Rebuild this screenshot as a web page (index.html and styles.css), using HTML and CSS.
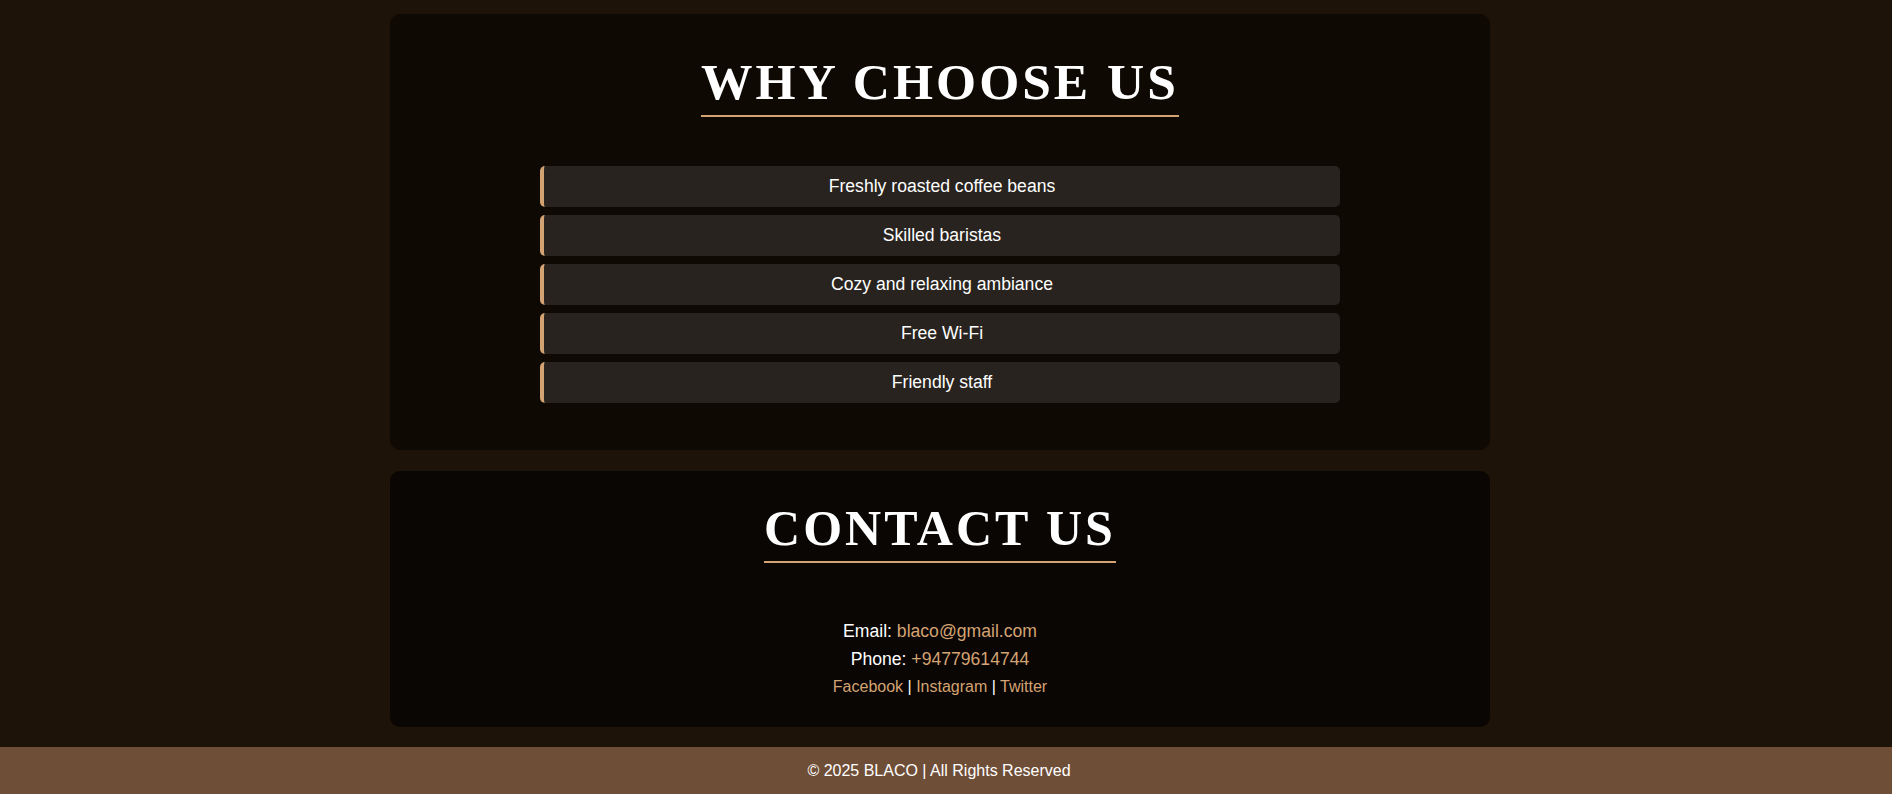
FILE: index.html
```html
<!DOCTYPE html>
<html lang="en">
<head>
<meta charset="utf-8">
<title>BLACO</title>
<link rel="stylesheet" href="styles.css">
</head>
<body>
<main class="page">
  <section class="card card-why">
    <div class="title-wrap"><h2 class="title title-why">Why Choose Us</h2></div>
    <ul class="features">
      <li class="feature">Freshly roasted coffee beans</li>
      <li class="feature">Skilled baristas</li>
      <li class="feature">Cozy and relaxing ambiance</li>
      <li class="feature">Free Wi-Fi</li>
      <li class="feature">Friendly staff</li>
    </ul>
  </section>
  <section class="card card-contact">
    <div class="title-wrap"><h2 class="title title-contact">Contact Us</h2></div>
    <div class="contact">
      <p class="contact-line">Email: <a class="link" href="#">blaco@gmail.com</a></p>
      <p class="contact-line">Phone: <a class="link" href="#">+94779614744</a></p>
      <p class="social"><a class="link" href="#">Facebook</a> | <a class="link" href="#">Instagram</a> | <a class="link" href="#">Twitter</a></p>
    </div>
  </section>
</main>
<footer class="footer">
  <p class="footer-text">© 2025 BLACO | All Rights Reserved</p>
</footer>
</body>
</html>
```

FILE: styles.css
```css
* { box-sizing: border-box; }

html, body {
  margin: 0;
  padding: 0;
  height: 794px;
  overflow: hidden;
}

body {
  background: #1e1308;
  color: #ffffff;
  font-family: "Liberation Sans", Arial, sans-serif;
}

.page {
  padding: 14px 12px 20px 0;
  display: flex;
  flex-direction: column;
  align-items: center;
  gap: 21px;
}

.card {
  width: 1100px;
  border-radius: 10px;
  text-align: center;
}

.card-why {
  background: #0f0904;
  height: 436px;
  padding: 38px 0 0;
}

.card-contact {
  background: #0a0603;
  height: 256px;
  padding: 28px 0 0;
}

.title-wrap { text-align: center; }

.title {
  display: inline-block;
  margin: 0;
  font-family: "Liberation Serif", "Times New Roman", serif;
  font-weight: bold;
  text-transform: uppercase;
  letter-spacing: 3px;
  color: #ffffff;
  line-height: normal;
  border-bottom: 2px solid #d4a373;
}

.title-why {
  font-size: 51.5px;
  padding-bottom: 4px;
}

.title-contact {
  font-size: 50px;
  padding-bottom: 4px;
}

.features {
  list-style: none;
  margin: 49px auto 0;
  padding: 0;
  width: 800px;
  display: flex;
  flex-direction: column;
  gap: 8px;
}

.feature {
  background: #28231e;
  border-left: 4px solid #d4a373;
  border-radius: 5px;
  padding: 10px;
  font-size: 17.6px;
  line-height: 21px;
  color: #ffffff;
}

.contact {
  margin-top: 54px;
}

.contact-line {
  margin: 0;
  font-size: 17.6px;
  line-height: 28px;
}

.social {
  margin: 0;
  font-size: 16px;
  line-height: 28px;
}

.link {
  color: #d4a373;
  text-decoration: none;
}

.footer {
  background: #6f4e37;
  height: 47px;
  padding-right: 14px;
  display: flex;
  align-items: center;
  justify-content: center;
}

.footer-text {
  margin: 0;
  font-size: 16px;
  line-height: 18px;
  color: #ffffff;
}
```
